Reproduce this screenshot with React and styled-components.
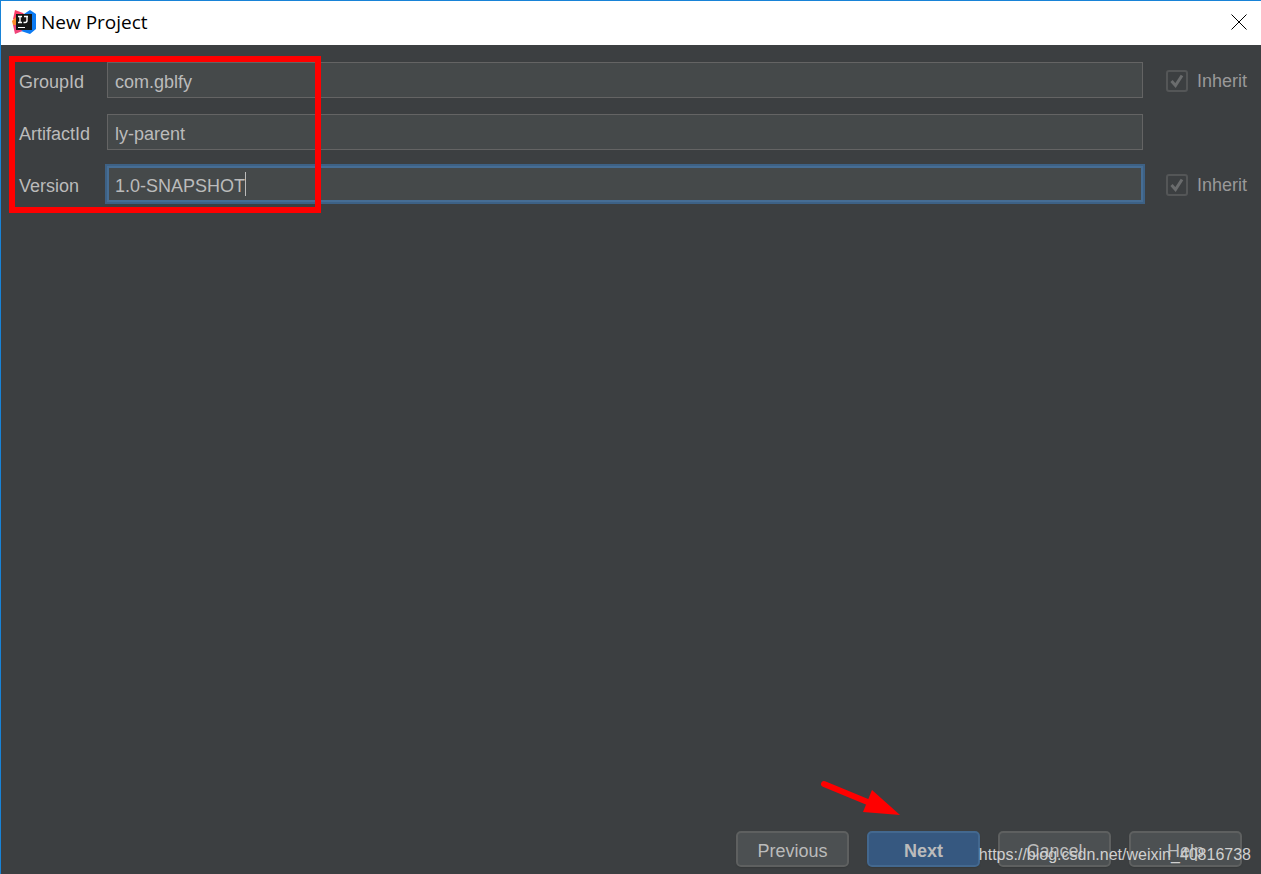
import { useLayoutEffect, useRef, useState } from 'react';
import styled, { createGlobalStyle, css } from 'styled-components';

function IdeaLogo() {
  return (
    <svg width="24" height="24" viewBox="0 0 24 24" aria-hidden="true">
      <path d="M3 0 11 3 14 6 8 13 1 9Z" fill="#fb3d68" />
      <path d="M0 11 4 7 8 12 6 18 1 15Z" fill="#ff8a2b" />
      <path d="M1 15 8 15 13 20 3 24Z" fill="#f0447a" />
      <path d="M12 4 18 0 24 4V19L18 24 9 21 16 17Z" fill="#0d7bf2" />
      <path d="M4 4H20V20H4Z" fill="#161616" />
      <path
        d="M6 6.5H10M8 6.5V12.5M6 12.5H10M12 6.5H16M15 6.5V10.5Q15 12.5 13 12.5H11.5"
        fill="none"
        stroke="#fff"
        strokeWidth="1.4"
      />
      <path d="M6 17.5H13" stroke="#fff" strokeWidth="1" />
    </svg>
  );
}

function Field({ id, label, value, inheritable, focused }) {
  const [text, setText] = useState(value);
  const [caretLeft, setCaretLeft] = useState(0);
  const inputRef = useRef(null);

  useLayoutEffect(() => {
    const context = document.createElement('canvas').getContext('2d');
    context.font = getComputedStyle(inputRef.current).font;
    setCaretLeft(Math.floor(context.measureText(text).width) + 8);
  }, [text]);

  return (
    <Row>
      <FieldLabel htmlFor={id}>{label}</FieldLabel>
      <InputBox>
        <TextInput
          ref={inputRef}
          id={id}
          type="text"
          autoComplete="off"
          spellCheck="false"
          value={text}
          autoFocus={focused}
          onChange={event => setText(event.currentTarget.value)}
        />
        <Caret style={{ left: caretLeft }} />
      </InputBox>
      {inheritable && (
        <InheritLabel>
          <Checkbox type="checkbox" defaultChecked disabled />
          <CheckMark width="16" height="16" viewBox="0 0 16 16">
            <path d="M2.5 8 6.5 12.5 13 2.5" />
          </CheckMark>
          Inherit
        </InheritLabel>
      )}
    </Row>
  );
}

function App() {
  return (
    <Dialog>
      <GlobalStyle />
      <TitleBar>
        <IdeaLogo />
        <Title>New Project</Title>
        <CloseButton type="button" aria-label="Close">
          <svg width="16" height="16" viewBox="0 0 16 16">
            <path d="M.5 .5 15.5 15.5M15.5 .5 .5 15.5" stroke="#000" />
          </svg>
        </CloseButton>
      </TitleBar>

      <Form>
        <Field id="groupId" label="GroupId" value="com.gblfy" inheritable />
        <Field id="artifactId" label="ArtifactId" value="ly-parent" />
        <Field
          id="version"
          label="Version"
          value="1.0-SNAPSHOT"
          inheritable
          focused
        />
        <Highlight />
      </Form>

      <Footer>
        <Button type="button">Previous</Button>
        <Button type="button" $primary>
          Next
        </Button>
        <Button type="button">Cancel</Button>
        <Button type="button">Help</Button>
        <Arrow width="80" height="36" viewBox="0 0 80 36">
          <path d="M4 4 50 23" stroke="#f00" strokeWidth="6" strokeLinecap="round" />
          <path d="M52 10 80 35 43 32Z" fill="#f00" />
        </Arrow>
        <Watermark>https://blog.csdn.net/weixin_40816738</Watermark>
      </Footer>
    </Dialog>
  );
}

// --------Styles-------

const GlobalStyle = createGlobalStyle`
  *,
  *::before,
  *::after {
    box-sizing: border-box;
  }

  body {
    margin: 0;
    background-color: #3c3f41;
    font-family: 'Liberation Sans', Arial, sans-serif;
    font-size: 18px;
    line-height: 20px;
  }
`;

const Dialog = styled.main`
  display: flex;
  flex-direction: column;
  min-height: 100vh;
  color: #bbbbbb;
  background-color: #3c3f41;
  border-top: 1px solid #1883d7;
  border-left: 1px solid #1883d7;
`;

const TitleBar = styled.header`
  display: flex;
  align-items: center;
  height: 44px;
  padding: 0 14px 2px 11px;
  color: #000;
  background-color: #fff;
`;

const Title = styled.h1`
  flex: 1;
  margin: 0 0 0 5px;
  font-family: 'Open Sans', 'Noto Sans', sans-serif;
  font-size: 19px;
  font-weight: 400;
  line-height: 24px;
`;

const CloseButton = styled.button`
  display: flex;
  padding: 0;
  border: 0;
  background: none;
  cursor: pointer;
`;

const Form = styled.form`
  position: relative;
  display: flex;
  flex: 1;
  flex-direction: column;
  gap: 16px;
  padding: 17px 14px 0 18px;
`;

const Row = styled.div`
  display: grid;
  grid-template-columns: 88px 1fr 104px;
  align-items: center;
  height: 36px;
`;

const FieldLabel = styled.label`
  padding-top: 3px;
`;

const InputBox = styled.div`
  position: relative;
`;

const Caret = styled.span`
  position: absolute;
  top: 6px;
  display: none;
  width: 1px;
  height: 24px;
  background-color: #bbbbbb;
  pointer-events: none;
`;

const TextInput = styled.input`
  display: block;
  width: 100%;
  height: 36px;
  padding: 4px 7px 0;
  color: #bbbbbb;
  font: inherit;
  background-color: #45494a;
  border: 1px solid #646464;
  border-radius: 0;
  outline: none;
  caret-color: transparent;

  &:focus {
    padding: 4px 6px 0;
    border: 2px solid #466d94;
    box-shadow: 0 0 0 2px #3d6185;
  }

  &:focus + ${Caret} {
    display: block;
  }
`;

const InheritLabel = styled.label`
  position: relative;
  display: flex;
  gap: 9px;
  align-items: center;
  justify-self: end;
  padding-top: 1px;
  color: #999999;
`;

const Checkbox = styled.input`
  appearance: none;
  width: 22px;
  height: 22px;
  margin: 0;
  border: 2px solid #545657;
  border-radius: 3px;
`;

const CheckMark = styled.svg`
  position: absolute;
  left: 3px;
  fill: none;
  stroke: #6a6c6d;
  stroke-width: 3;
`;

const Highlight = styled.div`
  position: absolute;
  top: 11px;
  left: 8px;
  width: 312px;
  height: 157px;
  border: 6px solid #f00;
  pointer-events: none;
`;

const Footer = styled.footer`
  position: relative;
  display: flex;
  gap: 18px;
  justify-content: flex-end;
  padding: 0 19px 7px;
`;

const Button = styled.button`
  width: 113px;
  height: 36px;
  padding: 3px 0 0;
  color: #bbbbbb;
  font: inherit;
  background-color: #4c5052;
  border: 2px solid #5e6060;
  border-radius: 5px;
  box-shadow: 0 1px 1px #36393a;
  cursor: pointer;

  ${({ $primary }) =>
    $primary &&
    css`
      font-weight: 700;
      background-color: #365880;
      border-color: #43688f;
    `}
`;

const Arrow = styled.svg`
  position: absolute;
  right: 361px;
  bottom: 58px;
  pointer-events: none;
`;

const Watermark = styled.span`
  position: absolute;
  right: 10px;
  bottom: 9px;
  color: #d0d0d0;
  font-size: 16px;
  pointer-events: none;
`;

export default App;
